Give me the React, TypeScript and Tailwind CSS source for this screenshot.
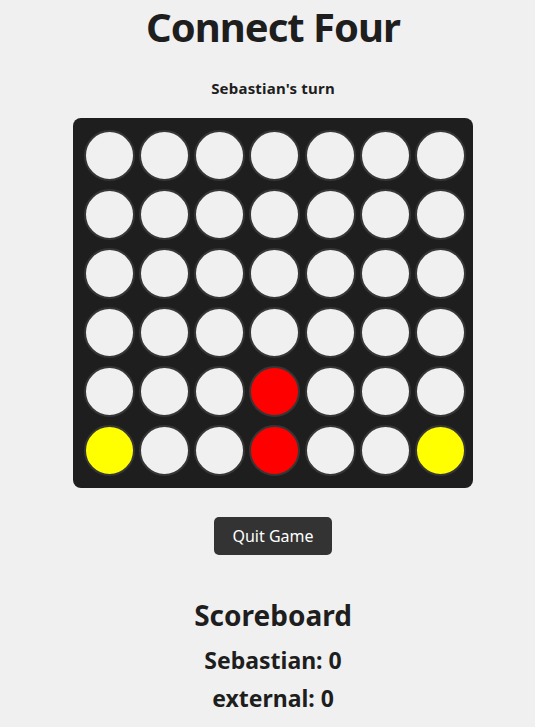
import React from "react";

type Cell = "" | "red" | "yellow";

const ROWS = 6;
const COLS = 7;

// board state, top row first
const board: Cell[][] = Array.from({ length: ROWS }, () =>
  Array.from({ length: COLS }, () => "" as Cell)
);
board[4][3] = "red";
board[5][0] = "yellow";
board[5][3] = "red";
board[5][6] = "yellow";

const font = { fontFamily: '"Noto Sans", "Open Sans", sans-serif' };

function Disc({ color }: { color: Cell }) {
  const fill =
    color === "red" ? "bg-[#ff0000]" : color === "yellow" ? "bg-[#ffff00]" : "bg-[#f0f0f0]";
  return (
    <div
      className={`w-[51px] h-[51px] rounded-full border-2 border-[#363636] ${fill}`}
    />
  );
}

export default function App() {
  return (
    <div
      className="min-h-[727px] w-full bg-[#f0f0f0] text-[#1e1e1e] flex flex-col items-center pl-[11px]"
      style={font}
    >
      <h1 className="mt-[3px] text-[40px] leading-[48px] font-bold tracking-[-1px]">Connect Four</h1>

      <p className="mt-[27px] text-[15px] leading-[20px] font-bold tracking-[0.2px]">Sebastian's turn</p>

      <div className="mt-[20px] w-[400px] bg-[#1e1e1e] rounded-[8px] pl-[11px] pr-[7px] py-[12px] grid grid-cols-7 gap-x-[4px] gap-y-[8px]">
        {board.map((row, r) =>
          row.map((c, i) => <Disc key={`${r}-${i}`} color={c} />)
        )}
      </div>

      <button className="mt-[29px] w-[118px] h-[38px] rounded-[5px] bg-[#333333] text-white text-[16px]">
        Quit Game
      </button>

      <h2 className="mt-[43px] text-[28px] leading-[34px] font-bold">Scoreboard</h2>
      <p className="mt-[13px] text-[23px] leading-[30px] font-bold">Sebastian: 0</p>
      <p className="mt-[8px] text-[23px] leading-[30px] font-bold">external: 0</p>
    </div>
  );
}
